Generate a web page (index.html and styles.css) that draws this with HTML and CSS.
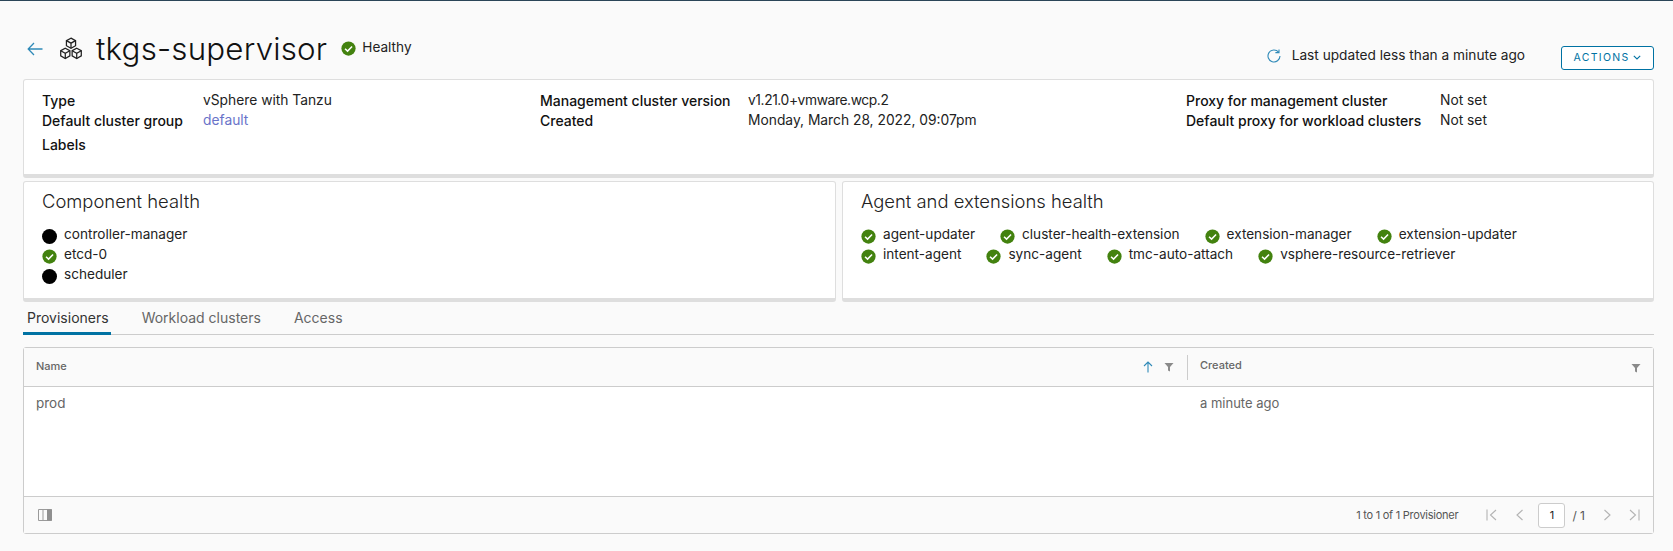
FILE: index.html
```html
<!DOCTYPE html>
<html lang="en">
<head>
<meta charset="utf-8">
<title>tkgs-supervisor</title>
<link rel="stylesheet" href="styles.css">
</head>
<body>
<svg class="defs" width="0" height="0" aria-hidden="true">
  <symbol id="ok" viewBox="0 0 16 16">
    <circle cx="8" cy="8" r="7.600" fill="#43820f"/>
    <path d="M4.300 8.200 7 10.800 11.800 5.800" fill="none" stroke="#fff" stroke-width="1.600"/>
  </symbol>
</svg>
<main class="page">
  <header class="head">
    <div class="head-left">
      <svg class="back" viewBox="0 0 16 14"><path d="M15.500 7H1.200M7 1 1.200 7 7 13" fill="none" stroke="#2f8ab8" stroke-width="1.300"/></svg>
      <svg class="cube" viewBox="0 0 21 21" fill="none" stroke="#222" stroke-width="1.100">
        <path d="M10.500 1 14.500 3.200V7.600L10.500 9.800 6.500 7.600V3.200Z"/><path d="M6.500 3.200 10.500 5.400 14.500 3.200M10.500 5.400V9.800"/>
        <path d="M5.500 9.800 9.500 12V16.500L5.500 18.800 1.500 16.500V12Z"/><path d="M1.500 12 5.500 14.200 9.500 12M5.500 14.200V18.800"/>
        <path d="M15.500 9.800 19.500 12V16.500L15.500 18.800 11.500 16.500V12Z"/><path d="M11.500 12 15.500 14.200 19.500 12M15.500 14.200V18.800"/>
      </svg>
      <h1 class="title">tkgs-supervisor</h1>
      <svg class="status-icon"><use href="#ok"/></svg>
      <span class="status-text">Healthy</span>
    </div>
    <div class="head-right">
      <svg class="refresh" viewBox="0 0 14 14" fill="none" stroke="#2f8ab8" stroke-width="1.100"><path d="M11.600 3.100A6 6 0 1 0 13 7"/><path d="M8.400 3.600H12V0.400"/></svg>
      <span class="updated">Last updated less than a minute ago</span>
      <button class="actions">ACTIONS<svg class="caret" viewBox="0 0 8 5"><path d="M.8.8 4 4 7.200.8" fill="none" stroke="#0072a3" stroke-width="1.100"/></svg></button>
    </div>
  </header>

  <section class="card info">
    <div class="info-grid">
      <b>Type</b><span>vSphere with Tanzu</span>
      <b>Management cluster version</b><span class="version">v1.21.0+vmware.wcp.2</span>
      <b>Proxy for management cluster</b><span>Not set</span>
      <b>Default cluster group</b><a class="link">default</a>
      <b>Created</b><span>Monday, March 28, 2022, 09:07pm</span>
      <b>Default proxy for workload clusters</b><span>Not set</span>
    </div>
    <b class="labels">Labels</b>
  </section>

  <div class="health">
    <section class="card panel">
      <h2>Component health</h2>
      <ul class="stack">
        <li><i class="dot"></i>controller-manager</li>
        <li><svg class="ico"><use href="#ok"/></svg>etcd-0</li>
        <li><i class="dot"></i>scheduler</li>
      </ul>
    </section>
    <section class="card panel">
      <h2>Agent and extensions health</h2>
      <ul class="wrap">
        <li><svg class="ico"><use href="#ok"/></svg>agent-updater</li>
        <li><svg class="ico"><use href="#ok"/></svg>cluster-health-extension</li>
        <li><svg class="ico"><use href="#ok"/></svg>extension-manager</li>
        <li><svg class="ico"><use href="#ok"/></svg>extension-updater</li>
        <li class="break"></li>
        <li><svg class="ico"><use href="#ok"/></svg>intent-agent</li>
        <li><svg class="ico"><use href="#ok"/></svg>sync-agent</li>
        <li><svg class="ico"><use href="#ok"/></svg>tmc-auto-attach</li>
        <li><svg class="ico"><use href="#ok"/></svg>vsphere-resource-retriever</li>
      </ul>
    </section>
  </div>

  <nav class="tabs">
    <span class="tab active">Provisioners</span>
    <span class="tab">Workload clusters</span>
    <span class="tab">Access</span>
  </nav>

  <section class="grid">
    <div class="grid-head">
      <div class="th th-name">
        <span>Name</span>
        <svg class="sort" viewBox="0 0 10 12"><path d="M5 11.500V1M1 5 5 1l4 4" fill="none" stroke="#2f8ab8" stroke-width="1.100"/></svg>
        <svg class="filter" viewBox="0 0 10 10"><path d="M.5 1h9L6 5v4.500L4 8.500V5Z" fill="#8a8a8a"/></svg>
      </div>
      <div class="th th-created">
        <span>Created</span>
        <svg class="filter" viewBox="0 0 10 10"><path d="M.5 1h9L6 5v4.500L4 8.500V5Z" fill="#8a8a8a"/></svg>
      </div>
    </div>
    <div class="grid-body">
      <div class="td td-name">prod</div>
      <div class="td td-created">a minute ago</div>
    </div>
    <footer class="grid-foot">
      <svg class="cols" viewBox="0 0 14 12"><path d="M.5.5h13v11H.5zM5 .5v11" fill="none" stroke="#9a9a9a"/><path d="M9 .5h5v11H9z" fill="#8f8f8f"/></svg>
      <div class="pager">
        <span class="count">1 to 1 of 1 Provisioner</span>
        <svg class="pg pg-first" viewBox="0 0 12 12"><path d="M1 .5v11M10 1 4.500 6l5.500 5" fill="none" stroke="#b3b3b3" stroke-width="1.100"/></svg>
        <svg class="pg" viewBox="0 0 12 12"><path d="M8.500 1 3 6l5.500 5" fill="none" stroke="#b3b3b3" stroke-width="1.100"/></svg>
        <span class="page-box">1</span>
        <span class="page-total">/ 1</span>
        <svg class="pg" viewBox="0 0 12 12"><path d="M3.500 1 9 6l-5.500 5" fill="none" stroke="#b3b3b3" stroke-width="1.100"/></svg>
        <svg class="pg pg-last" viewBox="0 0 12 12"><path d="M11 .5v11M2 1l5.500 5L2 11" fill="none" stroke="#b3b3b3" stroke-width="1.100"/></svg>
      </div>
    </footer>
  </section>
</main>
</body>
</html>
```
FILE: styles.css
```css
* { box-sizing: border-box; }
html, body { margin: 0; height: 100%; }
body {
  background: #fafafa;
  border-top: 1px solid #2b4558;
  color: #222;
  font-family: Inter, "Liberation Sans", sans-serif;
  font-size: 13.800px;
  overflow: hidden;
}
.defs { position: absolute; }
.page { padding: 0 19px 0 23px; }
ul { list-style: none; margin: 0; padding: 0; }

.head { display: flex; justify-content: space-between; height: 78px; }
.head-left { display: flex; align-items: center; height: 50px; margin-top: 23px; }
.back { width: 16px; height: 14px; margin-left: 4px; }
.cube { width: 24px; height: 24px; margin-left: 16px; }
.title { margin: 0 0 0 13px; font-size: 31.300px; font-weight: 300; letter-spacing: .2px; color: #111; }
.status-icon { width: 15px; height: 15px; margin-left: 14px; margin-top: -2px; }
.status-text { margin-left: 6px; margin-top: -5px; font-size: 13.600px; }
.head-right { display: flex; align-items: center; height: 25px; margin-top: 44px; }
.refresh { width: 14px; height: 14px; margin-top: -3px; }
.updated { margin-left: 11px; margin-top: -5px; font-size: 13.700px; }
.actions {
  display: flex; align-items: center; justify-content: center; gap: 4px;
  width: 93px; height: 24px; margin-left: 36px;
  background: #fff; border: 1px solid #0072a3; border-radius: 3px;
  color: #0072a3; font: 400 10.500px Inter, sans-serif; letter-spacing: 1.300px;
}
.caret { width: 8px; height: 5px; }

.card {
  background: #fff;
  border: 1px solid #dedede;
  border-bottom: 4px solid #dedede;
  border-radius: 3px;
}
.info { height: 99px; padding: 10px 18px; }
.info-grid {
  display: grid;
  grid-template-columns: 161px 337px 208px 438px 254px 1fr;
  grid-auto-rows: 20px;
  align-items: center;
}
.info b, .labels { font-weight: 500; font-size: 14px; color: #111; }
.labels { display: block; margin-top: 5px; line-height: 20px; }
.link { color: #6a73c9; }
.version { letter-spacing: -.4px; }

.health { display: grid; grid-template-columns: 813px 812px; gap: 6px; margin-top: 3px; }
.panel { height: 121px; padding: 8px 18px; font-size: 13.600px; }
.panel h2 { margin: 0 0 12px; font-size: 18.400px; font-weight: 300; line-height: 22px; color: #222; }
.stack li { display: flex; align-items: center; height: 20px; }
.wrap { display: flex; flex-wrap: wrap; column-gap: 25px; }
.wrap li { display: flex; align-items: center; height: 20px; }
.wrap .break { flex-basis: 100%; height: 0; }
.ico { width: 15px; height: 15px; margin: 4px 7px 0 0; flex: none; }
.dot { width: 15px; height: 15px; margin: 4px 7px 0 0; border-radius: 50%; background: #000; flex: none; }

.tabs { display: flex; gap: 27px; height: 33px; border-bottom: 1px solid #ccc; font-size: 14px; }
.tab { padding: 7px 2px 0 4px; color: #666; margin-bottom: -1px; }
.tab.active { color: #333; border-bottom: 3px solid #0072a3; }

.grid {
  display: flex; flex-direction: column;
  height: 187px; margin-top: 12px;
  background: #fff; border: 1px solid #ccc; border-radius: 3px;
}
.grid-head {
  display: grid; grid-template-columns: 1163px 1fr; height: 39px;
  background: #fafafa; border-bottom: 1px solid #ccc;
}
.th { display: flex; align-items: center; font-size: 11px; font-weight: 500; color: #666; }
.th-name { padding: 0 13px 0 12px; }
.th-name span { margin-right: auto; margin-top: -2px; }
.grid-head .th-created { border-left: 1px solid #ccc; margin: 7px 0 6px; padding: 0 12px; justify-content: space-between; }
.th-created span { margin-top: -5px; }
.sort { width: 10px; height: 12px; margin-right: 11px; }
.filter { width: 10px; height: 10px; flex: none; }
.grid-body { display: grid; grid-template-columns: 1163px 1fr; flex: 1; padding-top: 8px; color: #666; font-size: 13px; }
.td-name { padding-left: 12px; font-size: 13.500px; }
.grid-body .td-created { padding-left: 13px; }
.grid-foot {
  display: flex; align-items: center; justify-content: space-between;
  height: 37px; padding: 0 6px 0 14px;
  background: #fafafa; border-top: 1px solid #ccc;
}
.cols { width: 14px; height: 12px; }
.pager { display: flex; align-items: center; }
.count { font-size: 11px; letter-spacing: -.25px; color: #555; margin-right: 21px; }
.pg { width: 12px; height: 12px; margin: 0 7px; }
.pg-first { margin-right: 9px; }
.pg-last { margin-left: 8px; }
.page-box {
  display: flex; align-items: center; justify-content: center;
  width: 27px; height: 25px; margin-left: 5px;
  background: #fff; border: 1px solid #ccc; border-radius: 3px; font-size: 11px;
}
.page-total { margin: 0 9px 0 7px; font-size: 12px; color: #555; }
```
